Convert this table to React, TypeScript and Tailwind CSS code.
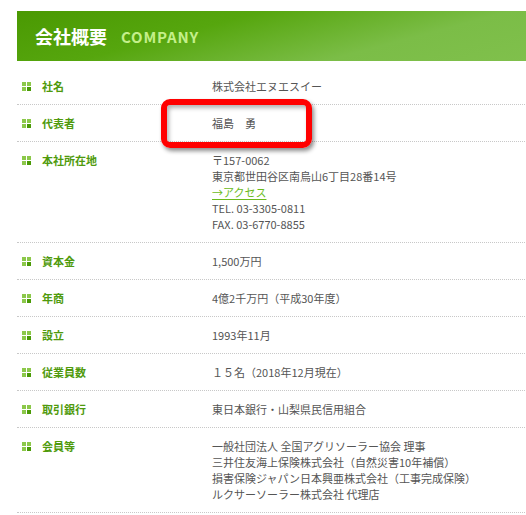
import React from "react";

type Row = { label: string; lines: React.ReactNode[] };

const rows: Row[] = [
  { label: "社名", lines: ["株式会社エヌエスイー"] },
  { label: "代表者", lines: ["福島　勇"] },
  {
    label: "本社所在地",
    lines: [
      "〒157-0062",
      "東京都世田谷区南烏山6丁目28番14号",
      <a key="a" href="#" className="text-[#6cbb1c] underline underline-offset-2">
        →アクセス
      </a>,
      "TEL. 03-3305-0811",
      "FAX. 03-6770-8855",
    ],
  },
  { label: "資本金", lines: ["1,500万円"] },
  { label: "年商", lines: ["4億2千万円（平成30年度）"] },
  { label: "設立", lines: ["1993年11月"] },
  { label: "従業員数", lines: ["１５名（2018年12月現在）"] },
  { label: "取引銀行", lines: ["東日本銀行・山梨県民信用組合"] },
  {
    label: "会員等",
    lines: [
      "一般社団法人 全国アグリソーラー協会 理事",
      "三井住友海上保険株式会社（自然災害10年補償）",
      "損害保険ジャパン日本興亜株式会社（工事完成保険）",
      "ルクサーソーラー株式会社 代理店",
    ],
  },
];

function Bullet() {
  return (
    <span className="grid grid-cols-2 gap-[1px] w-[9px] h-[9px] shrink-0">
      <span className="bg-[#8cc84a]" />
      <span className="bg-[#8cc84a]" />
      <span className="bg-[#8cc84a]" />
      <span className="bg-[#4a9a06]" />
    </span>
  );
}

export default function App() {
  return (
    <div
      className="relative w-[526px] h-[515px] overflow-hidden bg-white"
      style={{ fontFamily: '"Noto Sans CJK JP", "Noto Sans", sans-serif' }}
    >
      {/* page heading */}
      <div className="ml-[17px] mt-[11px] h-[50px] w-[520px] flex items-center pl-[18px] gap-[14px] bg-[linear-gradient(165deg,#4a9902_0%,#56a60e_35%,#7bbd47_70%,#80c04c_100%)]">
        <h2 className="text-white text-[18px] font-bold leading-none">会社概要</h2>
        <span className="text-[#c4ef8a] text-[15px] font-bold leading-none tracking-[0.8px]">
          COMPANY
        </span>
      </div>

      <dl className="ml-[17px] mt-[7px] w-[520px]">
        {rows.map((row) => (
          <div
            key={row.label}
            className="flex py-[10px] border-b border-dotted border-[#c8c8c8] text-[11px] leading-[16px]"
          >
            <dt className="w-[195px] shrink-0 flex items-center h-[16px] pl-[5px] gap-[11px] font-bold text-[#4f9a0c]">
              <Bullet />
              {row.label}
            </dt>
            <dd className="text-[#555]">
              {row.lines.map((l, i) => (
                <div key={i}>{l}</div>
              ))}
            </dd>
          </div>
        ))}
      </dl>

      {/* red highlight annotation */}
      <div className="absolute left-[161px] top-[99px] w-[151px] h-[49px] rounded-[9px] border-[6px] border-[#ff0000] shadow-[2px_3px_4px_rgba(0,0,0,0.45),inset_2px_3px_4px_rgba(0,0,0,0.3)]" />
    </div>
  );
}
